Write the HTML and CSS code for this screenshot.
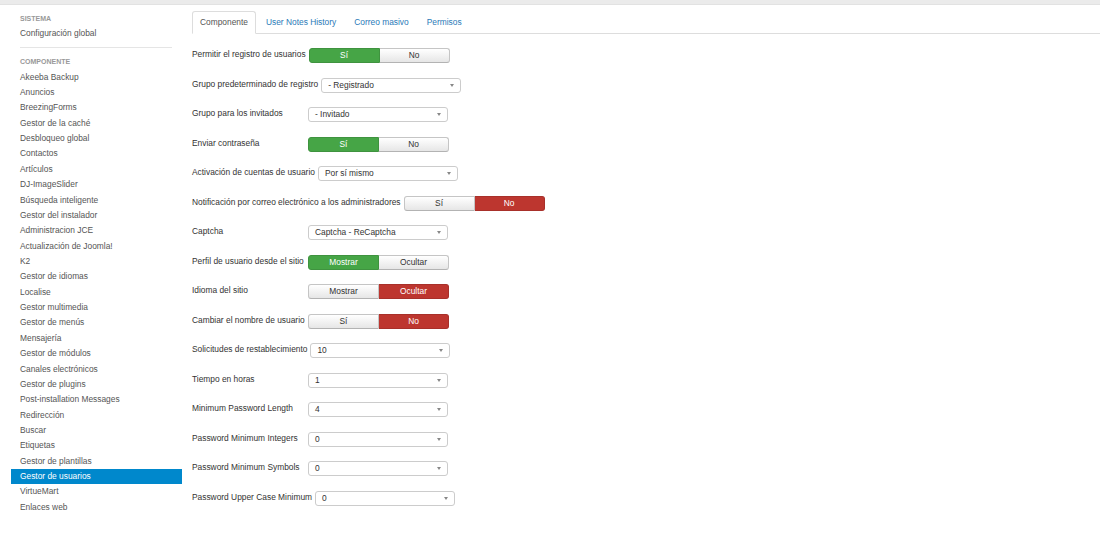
FILE: index.html
```html
<!DOCTYPE html>
<html lang="es">
<head>
  <meta charset="UTF-8" />
  <title>Gestor de usuarios: Opciones</title>
  <link rel="stylesheet" href="styles.css">
</head>
<body>
  <div class="topbar"></div>

  <div class="layout">
    <div class="sidebar">
      <div class="nav-header">Sistema</div>
      <a class="nav-item" href="#">Configuración global</a>
      <div class="divider"></div>
      <div class="nav-header">Componente</div>
      <a class="nav-item" href="#">Akeeba Backup</a>
      <a class="nav-item" href="#">Anuncios</a>
      <a class="nav-item" href="#">BreezingForms</a>
      <a class="nav-item" href="#">Gestor de la caché</a>
      <a class="nav-item" href="#">Desbloqueo global</a>
      <a class="nav-item" href="#">Contactos</a>
      <a class="nav-item" href="#">Artículos</a>
      <a class="nav-item" href="#">DJ-ImageSlider</a>
      <a class="nav-item" href="#">Búsqueda inteligente</a>
      <a class="nav-item" href="#">Gestor del instalador</a>
      <a class="nav-item" href="#">Administracion JCE</a>
      <a class="nav-item" href="#">Actualización de Joomla!</a>
      <a class="nav-item" href="#">K2</a>
      <a class="nav-item" href="#">Gestor de idiomas</a>
      <a class="nav-item" href="#">Localise</a>
      <a class="nav-item" href="#">Gestor multimedia</a>
      <a class="nav-item" href="#">Gestor de menús</a>
      <a class="nav-item" href="#">Mensajería</a>
      <a class="nav-item" href="#">Gestor de módulos</a>
      <a class="nav-item" href="#">Canales electrónicos</a>
      <a class="nav-item" href="#">Gestor de plugins</a>
      <a class="nav-item" href="#">Post-installation Messages</a>
      <a class="nav-item" href="#">Redirección</a>
      <a class="nav-item" href="#">Buscar</a>
      <a class="nav-item" href="#">Etiquetas</a>
      <a class="nav-item" href="#">Gestor de plantillas</a>
      <a class="nav-item active" href="#">Gestor de usuarios</a>
      <a class="nav-item" href="#">VirtueMart</a>
      <a class="nav-item" href="#">Enlaces web</a>
    </div>

    <div class="content">
      <ul class="tabs">
        <li class="active"><a href="#">Componente</a></li>
        <li><a href="#">User Notes History</a></li>
        <li><a href="#">Correo masivo</a></li>
        <li><a href="#">Permisos</a></li>
      </ul>

      <div class="form">
        <div class="row">
          <label>Permitir el registro de usuarios</label>
          <div class="toggle">
            <span class="btn yes">Sí</span><span class="btn">No</span>
          </div>
        </div>
        <div class="row">
          <label>Grupo predeterminado de registro</label>
          <div class="select">- Registrado</div>
        </div>
        <div class="row">
          <label>Grupo para los invitados</label>
          <div class="select">- Invitado</div>
        </div>
        <div class="row">
          <label>Enviar contraseña</label>
          <div class="toggle">
            <span class="btn yes">Sí</span><span class="btn">No</span>
          </div>
        </div>
        <div class="row">
          <label>Activación de cuentas de usuario</label>
          <div class="select">Por sí mismo</div>
        </div>
        <div class="row">
          <label>Notificación por correo electrónico a los administradores</label>
          <div class="toggle">
            <span class="btn">Sí</span><span class="btn no">No</span>
          </div>
        </div>
        <div class="row">
          <label>Captcha</label>
          <div class="select">Captcha - ReCaptcha</div>
        </div>
        <div class="row">
          <label>Perfil de usuario desde el sitio</label>
          <div class="toggle">
            <span class="btn yes">Mostrar</span><span class="btn">Ocultar</span>
          </div>
        </div>
        <div class="row">
          <label>Idioma del sitio</label>
          <div class="toggle">
            <span class="btn">Mostrar</span><span class="btn no">Ocultar</span>
          </div>
        </div>
        <div class="row">
          <label>Cambiar el nombre de usuario</label>
          <div class="toggle">
            <span class="btn">Sí</span><span class="btn no">No</span>
          </div>
        </div>
        <div class="row">
          <label>Solicitudes de restablecimiento</label>
          <div class="select">10</div>
        </div>
        <div class="row">
          <label>Tiempo en horas</label>
          <div class="select">1</div>
        </div>
        <div class="row">
          <label>Minimum Password Length</label>
          <div class="select">4</div>
        </div>
        <div class="row">
          <label>Password Minimum Integers</label>
          <div class="select">0</div>
        </div>
        <div class="row">
          <label>Password Minimum Symbols</label>
          <div class="select">0</div>
        </div>
        <div class="row">
          <label>Password Upper Case Minimum</label>
          <div class="select">0</div>
        </div>
      </div>
    </div>
  </div>
</body>
</html>
```

FILE: styles.css
```css
:root {
  --text: #333;
  --muted: #555;
  --link: #2a7ab8;
  --green: #46a546;
  --red: #bd362f;
  --border: #ccc;
}

* {
  margin: 0;
  padding: 0;
  box-sizing: border-box;
}

body {
  font-family: "Liberation Sans", Arial, sans-serif;
  font-size: 8.4px;
  color: var(--text);
  background: #fff;
}

a {
  text-decoration: none;
}

.topbar {
  height: 5px;
  background: #ebebeb;
  border-bottom: 1px solid #e2e2e2;
}

.layout {
  display: flex;
  align-items: flex-start;
}

/* sidebar */

.sidebar {
  width: 171px;
  margin-left: 11px;
  padding-top: 6px;
  display: flex;
  flex-direction: column;
}

.nav-header {
  padding-left: 9px;
  line-height: 15.36px;
  font-size: 7px;
  font-weight: bold;
  text-transform: uppercase;
  color: #999;
}

.nav-item {
  padding-left: 9px;
  line-height: 15.36px;
  color: var(--muted);
}

.nav-item.active {
  background: #0088cc;
  color: #fff;
}

.divider {
  height: 1px;
  background: #e5e5e5;
  margin: 5px 10px 6.6px 9px;
}

/* content */

.content {
  flex: 1;
  margin-left: 10px;
  padding-top: 6px;
}

.tabs {
  list-style: none;
  display: flex;
  border-bottom: 1px solid #ddd;
}

.tabs li {
  margin-right: 2px;
  margin-bottom: -1px;
}

.tabs a {
  display: block;
  padding: 4px 7px;
  line-height: 13px;
  border: 1px solid transparent;
  border-radius: 3px 3px 0 0;
  color: var(--link);
}

.tabs li.active a {
  color: var(--muted);
  background: #fff;
  border-color: #ddd #ddd transparent;
}

.form {
  padding-top: 14px;
}

.row {
  display: flex;
  align-items: flex-start;
  height: 15px;
  margin-bottom: 14.5px;
}

.row label {
  min-width: 113px;
  margin-right: 3px;
  line-height: 12px;
  white-space: nowrap;
}

.toggle {
  display: flex;
  width: 141px;
  height: 15px;
}

.btn {
  flex: 1;
  line-height: 13px;
  text-align: center;
  color: #333;
  background: linear-gradient(#fff, #e6e6e6);
  border: 1px solid #c5c5c5;
  border-bottom-color: #b3b3b3;
}

.btn:first-child {
  border-radius: 3px 0 0 3px;
}

.btn:last-child {
  border-radius: 0 3px 3px 0;
  border-left: none;
}

.btn.yes {
  background: var(--green);
  border-color: #3f933f;
  color: #fff;
}

.btn.no {
  background: var(--red);
  border-color: #a8302a;
  color: #fff;
}

.select {
  position: relative;
  width: 140px;
  height: 15px;
  line-height: 13px;
  padding-left: 6px;
  border: 1px solid var(--border);
  border-radius: 3px;
  background: #fff;
  color: #333;
}

.select::after {
  content: "";
  position: absolute;
  right: 6px;
  top: 5px;
  border-left: 2.5px solid transparent;
  border-right: 2.5px solid transparent;
  border-top: 3px solid #888;
}
```
